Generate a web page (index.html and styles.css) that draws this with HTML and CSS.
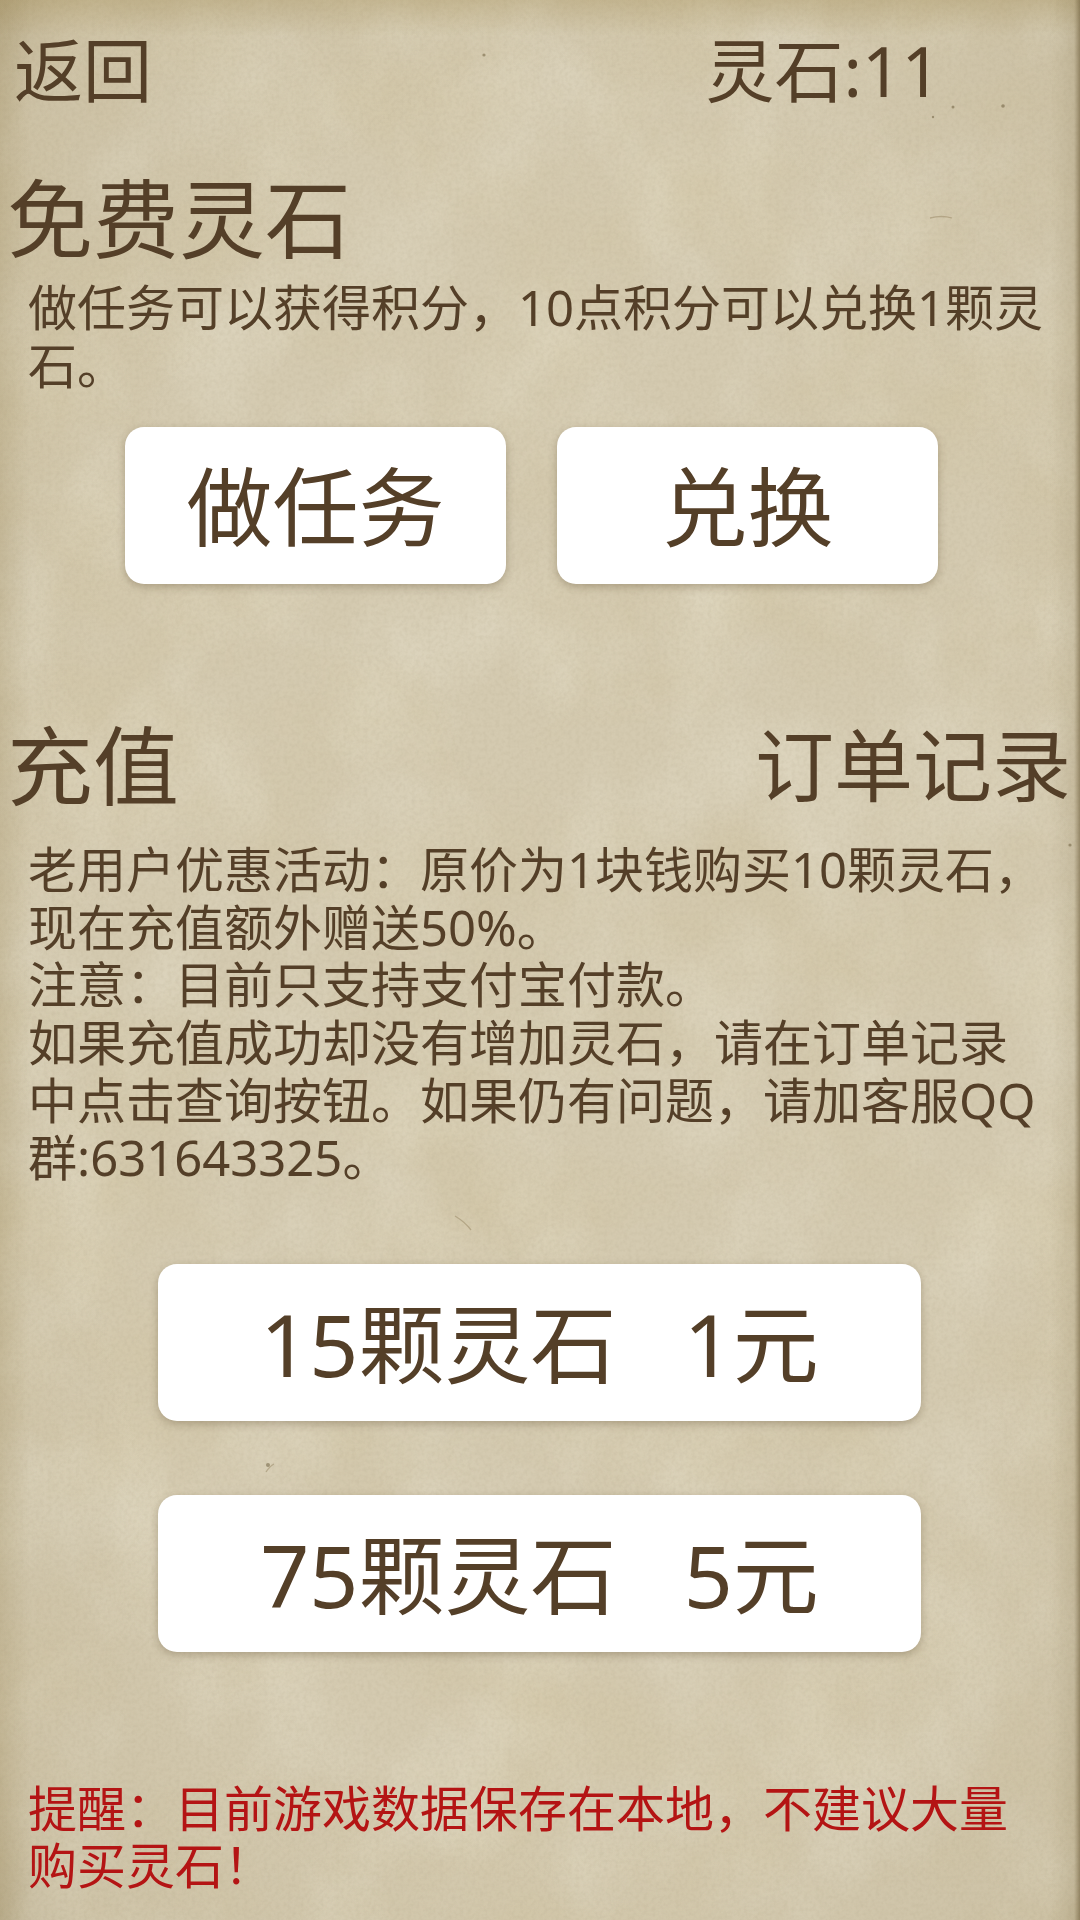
FILE: index.html
```html
<!DOCTYPE html>
<html lang="zh-CN">
<head>
<meta charset="utf-8">
<title>灵石</title>
<link rel="stylesheet" href="styles.css">
</head>
<body>
<svg class="paper" width="1080" height="1920" aria-hidden="true">
  <defs>
    <filter id="mottle" x="0" y="0" width="100%" height="100%">
      <feTurbulence type="fractalNoise" baseFrequency="0.005 0.006" numOctaves="7" seed="7"/>
      <feColorMatrix type="matrix" values="0 0 0 0 0.60  0 0 0 0 0.50  0 0 0 0 0.28  1.7 0 0 0 -0.68"/>
    </filter>
    <filter id="light" x="0" y="0" width="100%" height="100%">
      <feTurbulence type="fractalNoise" baseFrequency="0.009 0.007" numOctaves="7" seed="21"/>
      <feColorMatrix type="matrix" values="0 0 0 0 0.93  0 0 0 0 0.91  0 0 0 0 0.80  0 1.8 0 0 -0.74"/>
    </filter>
    <filter id="grain" x="0" y="0" width="100%" height="100%">
      <feTurbulence type="fractalNoise" baseFrequency="0.25" numOctaves="3" seed="3"/>
      <feColorMatrix type="matrix" values="0 0 0 0 0.42  0 0 0 0 0.36  0 0 0 0 0.24  0 0 1.2 0 -0.44"/>
    </filter>
    <radialGradient id="vignette" cx="52%" cy="50%" r="74%">
      <stop offset="0.62" stop-color="#8a7646" stop-opacity="0"/>
      <stop offset="0.9" stop-color="#8a7646" stop-opacity="0.1"/>
      <stop offset="1" stop-color="#6d5a30" stop-opacity="0.3"/>
    </radialGradient>
    <linearGradient id="rightEdge" x1="0" x2="1" y1="0" y2="0">
      <stop offset="0" stop-color="#7d6c45" stop-opacity="0"/>
      <stop offset="0.8" stop-color="#7d6c45" stop-opacity="0.14"/>
      <stop offset="1" stop-color="#6a5a38" stop-opacity="0.6"/>
    </linearGradient>
    <linearGradient id="leftEdge" x1="1" x2="0" y1="0" y2="0">
      <stop offset="0" stop-color="#94804e" stop-opacity="0"/>
      <stop offset="1" stop-color="#94804e" stop-opacity="0.2"/>
    </linearGradient>
    <linearGradient id="topEdge" x1="0" x2="0" y1="0" y2="1">
      <stop offset="0" stop-color="#a18a50" stop-opacity="0.3"/>
      <stop offset="1" stop-color="#a18a50" stop-opacity="0"/>
    </linearGradient>
  </defs>
  <rect width="1080" height="1920" fill="#d4cab0"/>
  <rect width="1080" height="1920" filter="url(#mottle)" opacity="0.36"/>
  <rect width="1080" height="1920" filter="url(#light)" opacity="0.3"/>
  <rect width="1080" height="1920" filter="url(#grain)" opacity="0.26"/>
  <rect width="1080" height="1920" fill="url(#vignette)"/>
  <rect width="1080" height="36" fill="url(#topEdge)"/>
  <rect x="1050" width="30" height="1920" fill="url(#rightEdge)"/>
  <rect width="30" height="1920" fill="url(#leftEdge)"/>
  <g fill="#6f6040" opacity="0.55">
    <circle cx="484" cy="55" r="1.6"/>
    <circle cx="953" cy="107" r="1.5"/>
    <circle cx="1003" cy="106" r="1.8"/>
    <circle cx="933" cy="117" r="1.2"/>
    <circle cx="1070" cy="845" r="1.6"/>
    <circle cx="268" cy="1465" r="2"/>
  </g>
  <g fill="none" stroke="#8d7c58" stroke-width="1.3" opacity="0.45">
    <path d="M455 1216q10 6 16 14"/>
    <path d="M266 1472q4-6 8-8"/>
    <path d="M930 218q12-3 22 0"/>
  </g>
</svg>

<main class="page">
  <header class="topbar">
    <span class="back">返回</span>
    <span class="balance">灵石:11</span>
  </header>

  <section class="free">
    <h2 class="title">免费灵石</h2>
    <p class="text text-free">做任务可以获得积分，10点积分可以兑换1颗灵<br>石。</p>
    <div class="actions">
      <button class="btn btn-half" type="button">做任务</button>
      <button class="btn btn-half" type="button">兑换</button>
    </div>
  </section>

  <section class="recharge">
    <div class="title-row">
      <h2 class="title">充值</h2>
      <span class="orders">订单记录</span>
    </div>
    <p class="text text-recharge">老用户优惠活动：原价为1块钱购买10颗灵石，<br>现在充值额外赠送50%。<br>注意：目前只支持支付宝付款。<br>如果充值成功却没有增加灵石，请在订单记录<br>中点击查询按钮。如果仍有问题，请加客服QQ<br>群:631643325。</p>
    <div class="packs">
      <button class="btn btn-pack" type="button">15颗灵石&nbsp;&nbsp;&nbsp;1元</button>
      <button class="btn btn-pack" type="button">75颗灵石&nbsp;&nbsp;&nbsp;5元</button>
    </div>
  </section>

  <p class="text warning">提醒：目前游戏数据保存在本地，不建议大量<br>购买灵石！</p>
</main>
</body>
</html>
```
FILE: styles.css
```css
* {
  box-sizing: border-box;
}

html,
body {
  margin: 0;
  padding: 0;
}

body {
  position: relative;
  width: 1080px;
  height: 1920px;
  overflow: hidden;
  background: #d4cab0;
  color: #543f28;
  font-family: "Noto Sans", "Noto Sans CJK SC", sans-serif;
  font-weight: 400;
}

.paper {
  position: absolute;
  inset: 0;
  display: block;
}

.page {
  position: relative;
  display: flex;
  flex-direction: column;
  height: 1920px;
}

.topbar {
  display: flex;
  justify-content: space-between;
  padding: 25px 139px 0 14px;
  font-size: 69px;
  line-height: 90px;
}

.free {
  margin-top: 54px;
}

.title {
  margin: 0;
  padding-left: 7px;
  font-size: 86px;
  font-weight: 400;
  line-height: 100px;
}

.text {
  margin: 0;
  padding-left: 28px;
  font-size: 49px;
  line-height: 57.6px;
  white-space: nowrap;
}

.text-free {
  margin-top: 10px;
}

.actions {
  display: flex;
  gap: 51px;
  margin-top: 33px;
  padding-left: 125px;
}

.btn {
  display: block;
  padding: 3px 0 0;
  border: 0;
  border-radius: 19px;
  background: #fff;
  box-shadow: 0 3px 8px rgba(70, 50, 20, 0.28);
  color: inherit;
  font: inherit;
  font-size: 86px;
  line-height: 1;
  white-space: nowrap;
}

.btn-half {
  width: 381px;
  height: 157px;
}

.recharge {
  margin-top: 132px;
}

.title-row {
  display: flex;
  justify-content: space-between;
  align-items: center;
  padding-right: 9px;
}

.orders {
  font-size: 79px;
  line-height: 100px;
}

.text-recharge {
  margin-top: 25px;
}

.packs {
  display: flex;
  flex-direction: column;
  align-items: flex-start;
  gap: 74px;
  margin-top: 77px;
  padding-left: 158px;
}

.btn-pack {
  width: 763px;
  height: 157px;
}

.warning {
  margin-top: 128px;
  color: #b41414;
}
```
